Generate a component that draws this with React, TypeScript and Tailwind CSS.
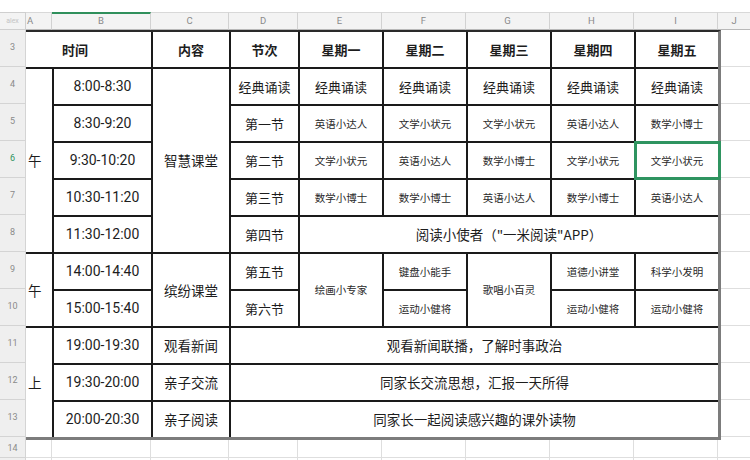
import { Fragment, type ReactNode } from "react";

const COLS = ["A", "B", "C", "D", "E", "F", "G", "H", "I"];
const COL_W = ["w-[26px]", "w-[99px]", "w-[78px]", "w-[69px]", "w-[84px]", "w-[84px]", "w-[84px]", "w-[84px]", "w-[84px]"];

function Cell({
  className = "",
  children,
}: {
  className?: string;
  children?: ReactNode;
}) {
  return (
    <div
      className={`relative flex items-center justify-center bg-white text-[#1d1d1d] ${className}`}
    >
      {children}
    </div>
  );
}

const big = "text-[13.5px]";
const small = "text-[10.5px] text-[#2a2a2a]";
const time = "text-[14px] font-['Roboto','Noto_Sans_CJK_SC',sans-serif]";
const head = "bg-[#c6e0b4] text-[13px] font-bold";

const weekdays = ["星期一", "星期二", "星期三", "星期四", "星期五"];
const rows5to7 = [
  { time: "8:30-9:20", slot: "第一节", items: ["英语小达人", "文学小状元", "文学小状元", "英语小达人", "数学小博士"] },
  { time: "9:30-10:20", slot: "第二节", items: ["文学小状元", "英语小达人", "数学小博士", "文学小状元", "文学小状元"] },
  { time: "10:30-11:20", slot: "第三节", items: ["数学小博士", "数学小博士", "英语小达人", "数学小博士", "英语小达人"] },
];

export default function App() {
  const rowNums = [3, 4, 5, 6, 7, 8, 9, 10, 11, 12, 13];
  return (
    <div className="h-[460px] w-[750px] overflow-hidden bg-white font-['Noto_Sans_CJK_SC','Noto_Sans',sans-serif]">
      <div className="h-[12px]" />

      {/* column headers */}
      <div className="flex h-[18px] bg-[#f3f3f3] text-[9.5px] text-[#8a8a8a] font-['Roboto',sans-serif]">
        <div className="flex w-[26px] items-center justify-center border-r border-t border-b border-[#cfcfcf] text-[7px] text-[#c4c4c4]">
          alex
        </div>
        {COLS.map((c, i) => (
          <div
            key={c}
            className={`flex ${COL_W[i]} items-center justify-center border-r border-b border-r-[#d2d2d2] border-b-[#b8b8b8] ${
              c === "B" ? "border-t-2 border-t-[#2f8f5b]" : "border-t border-t-[#d8d8d8]"
            }`}
          >
            {c === "A" ? <span className="mr-auto pl-[1px]">A</span> : c}
          </div>
        ))}
        <div className="flex flex-1 items-center justify-center border-t border-b border-t-[#d8d8d8] border-b-[#b8b8b8]">
          J
        </div>
      </div>

      <div className="flex">
        {/* row numbers */}
        <div className="flex w-[26px] flex-col bg-[#efefef] text-[9px] text-[#8a8a8a] font-['Roboto',sans-serif]">
          {rowNums.map((n) => (
            <div
              key={n}
              className={`flex h-[37px] items-center justify-center border-r border-b border-[#d4d4d4] ${
                n === 6 ? "text-[#2f9460]" : ""
              }`}
            >
              {n}
            </div>
          ))}
          <div className="flex-1 border-r border-[#d4d4d4]" />
        </div>

        {/* table */}
        <div className="grid grid-cols-[26px_97px_76px_67px_82px_82px_82px_82px_82px] grid-rows-[repeat(11,35px)] gap-[2px] border-t-2 border-r-[3px] border-b-[3px] border-t-[#2a2a2a] border-r-[#7c7c7c] border-b-[#7c7c7c] bg-[#1a1a1a]">
          {/* row 3 */}
          <Cell className={`col-span-2 justify-start pl-[36px] ${head}`}>时间</Cell>
          <Cell className={head}>内容</Cell>
          <Cell className={head}>节次</Cell>
          {weekdays.map((d) => (
            <Cell key={d} className={head}>
              {d}
            </Cell>
          ))}

          {/* row 4 */}
          <Cell className={`row-span-5 justify-start pl-[2px] ${big}`}>午</Cell>
          <Cell className={time}>8:00-8:30</Cell>
          <Cell className={`row-span-5 ${big}`}>智慧课堂</Cell>
          <Cell className="text-[13px]">经典诵读</Cell>
          {weekdays.map((d) => (
            <Cell key={d} className="text-[13px]">
              经典诵读
            </Cell>
          ))}

          {/* rows 5-7 */}
          {rows5to7.map((r, ri) => (
            <Fragment key={r.time}>
              <Cell className={time}>{r.time}</Cell>
              <Cell className="text-[13px]">{r.slot}</Cell>
              {r.items.map((it, i) => (
                <Cell key={i} className={small}>
                  {it}
                  {ri === 1 && i === 4 ? (
                    <div className="absolute -top-[2px] -right-[3px] -bottom-[2px] -left-[2px] border-[3px] border-[#2f9460]" />
                  ) : null}
                </Cell>
              ))}
            </Fragment>
          ))}

          {/* row 8 */}
          <Cell className={time}>11:30-12:00</Cell>
          <Cell className="text-[13px]">第四节</Cell>
          <Cell className={`col-span-5 ${big}`}>阅读小使者（"一米阅读"APP）</Cell>

          {/* rows 9-10 */}
          <Cell className={`row-span-2 justify-start pl-[2px] ${big}`}>午</Cell>
          <Cell className={time}>14:00-14:40</Cell>
          <Cell className={`row-span-2 ${big}`}>缤纷课堂</Cell>
          <Cell className="text-[13px]">第五节</Cell>
          <Cell className={`row-span-2 ${small}`}>绘画小专家</Cell>
          <Cell className={small}>键盘小能手</Cell>
          <Cell className={`row-span-2 ${small}`}>歌唱小百灵</Cell>
          <Cell className={small}>道德小讲堂</Cell>
          <Cell className={small}>科学小发明</Cell>
          <Cell className={time}>15:00-15:40</Cell>
          <Cell className="text-[13px]">第六节</Cell>
          <Cell className={small}>运动小健将</Cell>
          <Cell className={small}>运动小健将</Cell>
          <Cell className={small}>运动小健将</Cell>

          {/* rows 11-13 */}
          <Cell className={`row-span-3 justify-start pl-[2px] ${big}`}>上</Cell>
          <Cell className={time}>19:00-19:30</Cell>
          <Cell className={big}>观看新闻</Cell>
          <Cell className={`col-span-6 ${big}`}>观看新闻联播，了解时事政治</Cell>
          <Cell className={time}>19:30-20:00</Cell>
          <Cell className={big}>亲子交流</Cell>
          <Cell className={`col-span-6 ${big}`}>同家长交流思想，汇报一天所得</Cell>
          <Cell className={time}>20:00-20:30</Cell>
          <Cell className={big}>亲子阅读</Cell>
          <Cell className={`col-span-6 ${big}`}>同家长一起阅读感兴趣的课外读物</Cell>
        </div>

        {/* column J */}
        <div className="flex flex-1 flex-col">
          {rowNums.map((n) => (
            <div key={n} className="h-[37px] border-b border-[#dedede]" />
          ))}
        </div>
      </div>

      {/* row 14 */}
      <div className="flex h-[18px]">
        <div className="flex w-[26px] items-center justify-center border-r border-b border-[#d4d4d4] bg-[#efefef] text-[9px] text-[#8a8a8a] font-['Roboto',sans-serif]">
          14
        </div>
        {COL_W.map((w, i) => (
          <div key={i} className={`${w} border-r border-b border-[#dedede]`} />
        ))}
        <div className="flex-1 border-b border-[#dedede]" />
      </div>
      <div className="flex h-[10px]">
        <div className="w-[26px] border-r border-[#d4d4d4] bg-[#efefef]" />
        {COL_W.map((w, i) => (
          <div key={i} className={`${w} border-r border-[#dedede]`} />
        ))}
      </div>
    </div>
  );
}
